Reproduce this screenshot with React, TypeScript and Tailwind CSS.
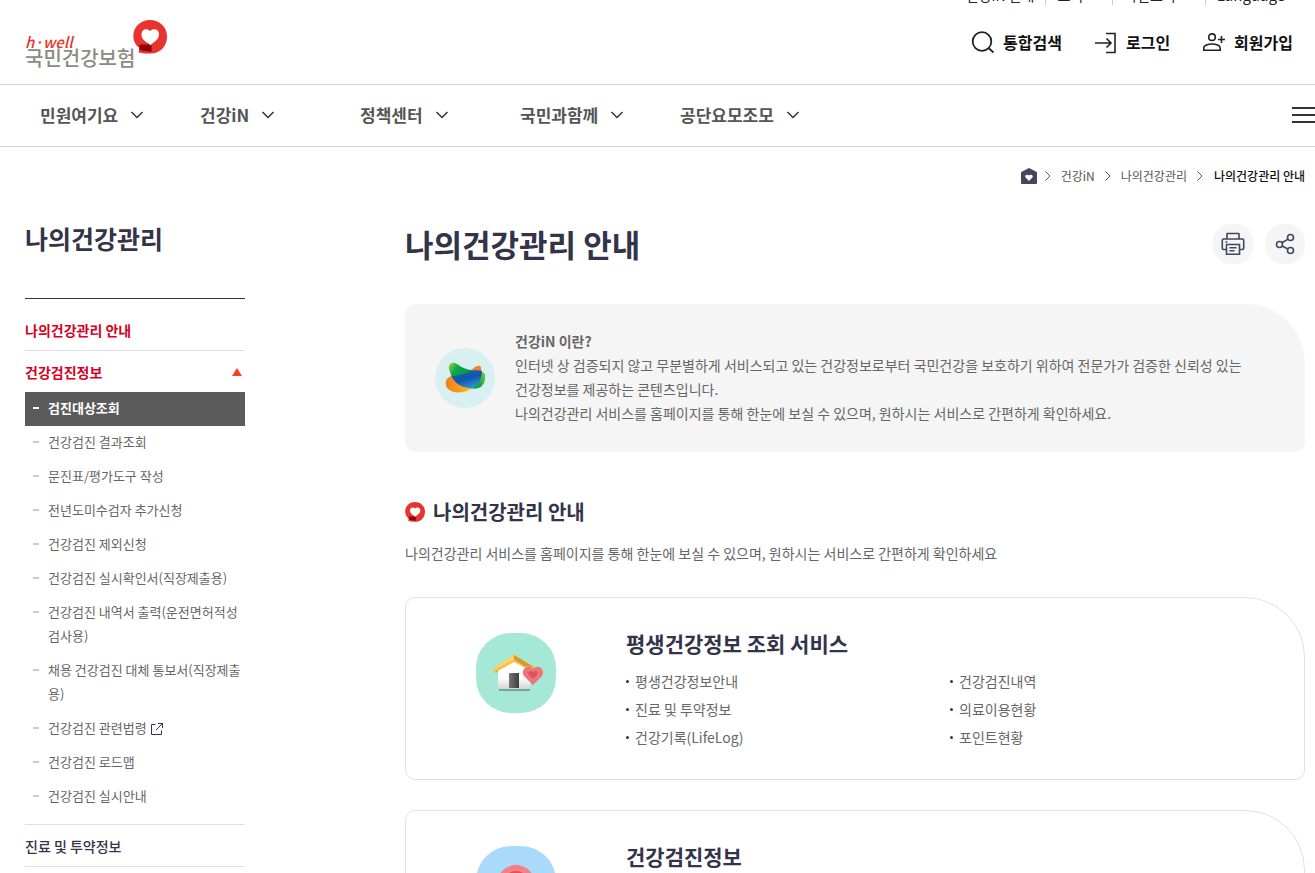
import React from 'react'
import clsx from 'clsx'

const mainMenu = ['민원여기요', '건강iN', '정책센터', '국민과함께', '공단요모조모']

const subMenu = [
  { label: '검진대상조회', active: true },
  { label: '건강검진 결과조회' },
  { label: '문진표/평가도구 작성' },
  { label: '전년도미수검자 추가신청' },
  { label: '건강검진 제외신청' },
  { label: '건강검진 실시확인서(직장제출용)' },
  { label: '건강검진 내역서 출력(운전면허적성검사용)' },
  { label: '채용 건강검진 대체 통보서(직장제출용)' },
  { label: '건강검진 관련법령', external: true },
  { label: '건강검진 로드맵' },
  { label: '건강검진 실시안내' },
]

interface IconProps {
  className?: string
}

function HeartMark({ className }: IconProps) {
  return (
    <svg viewBox="0 0 34 34" className={className} aria-hidden="true">
      <path d="M17 0C26.5 0 34 7 34 16.4 34 26.5 26.5 34 17 33.5 13 33.8 9 33 5.5 32.500L6.500 28C2.500 25 .3 21 .3 16.400.3 7 7.500 0 17 0Z" fill="#e7342f" />
      <path d="M6.800 24.500L18.500 24.500V31.800C14 31.700 9.500 30.800 6.200 29.500Z" fill="#8f0008" />
      <path d="M17 11.200C14.500 8 8.500 8.800 8.500 14.500 8.500 18.500 11.500 21 14 22.500 16 23.700 17 24.500 17.500 25.500 18 24.500 19 23.700 21 22.300 24 20 26 18 26 14.500 26 8.800 20 8 17 11.200Z" fill="#fff" />
    </svg>
  )
}

function ChevronDown() {
  return (
    <svg width="14" height="14" viewBox="0 0 14 14" fill="none" stroke="#333" strokeWidth="1.5" aria-hidden="true">
      <path d="M1.500 4L7 9.500 12.500 4" />
    </svg>
  )
}

function ChevronRight() {
  return (
    <svg width="6" height="10" viewBox="0 0 6 10" fill="none" stroke="#555" aria-hidden="true">
      <path d="M.5.500l4.500 4.500-4.500 4.500" />
    </svg>
  )
}

function SearchIcon() {
  return (
    <svg width="24" height="24" viewBox="0 0 24 24" fill="none" stroke="#222" strokeWidth="1.8" aria-hidden="true">
      <circle cx="11" cy="11.500" r="9.300" />
      <path d="M17.500 18l5 4.500" />
    </svg>
  )
}

function LoginIcon() {
  return (
    <svg width="24" height="24" viewBox="0 0 24 24" fill="none" stroke="#222" strokeWidth="1.600" aria-hidden="true">
      <path d="M12 3.500h9v19h-9M1 13h16M12.500 8.500L17 13l-4.500 4.500" />
    </svg>
  )
}

function JoinIcon() {
  return (
    <svg width="24" height="24" viewBox="0 0 24 24" fill="none" stroke="#222" strokeWidth="1.600" aria-hidden="true">
      <circle cx="10" cy="7.200" r="3.300" />
      <path d="M1.800 20.200v-2.200c0-2.500 4-4 8.200-4s8.200 1.500 8.200 4v2.200ZM19.500 6v7M16 9.500h7" />
    </svg>
  )
}

function HomeIcon() {
  return (
    <svg width="16" height="16" viewBox="0 0 16 16" aria-hidden="true">
      <path d="M8 0l7.300 3.800q.7.400.7 1.200v10q0 1-1 1H1q-1 0-1-1V5q0-.8.7-1.200Z" fill="#45455f" />
      <path d="M8 13L4.800 9.800C3 7.800 6 5.300 8 7.500 10 5.300 13 7.800 11.200 9.800Z" fill="#fff" />
    </svg>
  )
}

function PrintIcon() {
  return (
    <svg width="24" height="24" viewBox="0 0 24 24" fill="none" stroke="#45455f" strokeWidth="1.600" aria-hidden="true">
      <path d="M6 7V2q0-.5.500-.500h11q.5 0 .5.500v5M5.500 17.500H2.500q-1.200 0-1.200-1.200V8.200Q1.300 7 2.500 7h19q1.200 0 1.200 1.200v8.100q0 1.200-1.200 1.200H18.500" />
      <path d="M5.500 12.500h13v9.800h-13ZM8.500 15.700h7M8.500 18.700h5M4.500 10h2" />
    </svg>
  )
}

function ShareIcon() {
  return (
    <svg width="24" height="24" viewBox="0 0 24 24" fill="none" stroke="#45455f" strokeWidth="1.600" aria-hidden="true">
      <circle cx="6.500" cy="12.500" r="3" />
      <circle cx="17.500" cy="5.500" r="3" />
      <circle cx="17.500" cy="18.500" r="3" />
      <path d="M9 10.800l6-3.700M9 14l6 3" />
    </svg>
  )
}

function ExternalIcon() {
  return (
    <svg className="ml-1 inline" width="12" height="12" viewBox="0 0 12 12" fill="none" stroke="#33334a" aria-label="새창">
      <path d="M4.500 1.500h-4v10h10v-4M7 .500h4.500v4.500M11.500.500L5 7" />
    </svg>
  )
}

function WaveLogo() {
  return (
    <svg width="60" height="60" viewBox="0 0 60 60" className="shrink-0" aria-hidden="true">
      <defs>
        <linearGradient id="green" x1="0" x2="1" y2=".4">
          <stop offset="0" stopColor="#b5d334" />
          <stop offset=".4" stopColor="#0ba84a" />
          <stop offset="1" stopColor="#0b9444" />
        </linearGradient>
        <linearGradient id="blue" x1=".2" x2=".7" y1="0" y2="1">
          <stop offset="0" stopColor="#1560b0" />
          <stop offset=".5" stopColor="#1157ad" />
          <stop offset="1" stopColor="#2b9be0" />
        </linearGradient>
        <linearGradient id="orange" x1="0" x2="1">
          <stop offset="0" stopColor="#f47b20" />
          <stop offset="1" stopColor="#ffc20e" />
        </linearGradient>
        <linearGradient id="leaf" x1="1" x2="0" y2="1">
          <stop offset="0" stopColor="#8cc63f" />
          <stop offset=".6" stopColor="#0ba84a" />
        </linearGradient>
      </defs>
      <circle cx="30" cy="30" r="30" fill="#d8f0f2" />
      <path d="M36 22.500C40 18.500 45 16 46 19.500L46.500 24 38 26Z" fill="#f58220" />
      <path d="M17 28C10 29 9 37 13 41 20 47 31 44.500 38 40L28 33Z" fill="url(#orange)" />
      <path d="M46 24C50 24 50.500 27 50 31 49 38 44 41.500 37.500 40.500Z" fill="url(#leaf)" />
      <path d="M14 21C13 15 18 13.500 22 16 27 20 33 22 38 22L34 28 16.500 28.500Z" fill="url(#green)" />
      <path d="M16.500 28C23 28 30 26 35 23.500 38 22 44 22 47 23 47 30 43 37 37 40.500 27 40 19 35 16.500 28Z" fill="url(#blue)" />
    </svg>
  )
}

function HouseArt() {
  return (
    <svg width="80" height="80" viewBox="0 0 80 80" aria-hidden="true">
      <defs>
        <linearGradient id="wall" x2="0" y2="1">
          <stop offset=".6" stopColor="#fff" />
          <stop offset="1" stopColor="#d5d5d5" />
        </linearGradient>
        <linearGradient id="door">
          <stop offset="0" stopColor="#777" />
          <stop offset="1" stopColor="#3c3c3c" />
        </linearGradient>
      </defs>
      <path d="M23 56h31v2H23Z" fill="#6da898" />
      <path d="M18 36l4 4v-3Z" fill="#c98f2a" />
      <path d="M22 38L38 28 54 38v17q0 1-1 1H23q-1 0-1-1Z" fill="url(#wall)" />
      <path d="M38 22L58 34v5L38 29 18 40V35Z" fill="#f7bd45" />
      <path d="M38 22L58 34 48 33 38 26Z" fill="#d89a28" />
      <path d="M38 22L18 35v2L38 27Z" fill="#ffd166" />
      <path d="M33 41q0-1 1-1h9v15H33Z" fill="url(#door)" />
      <path d="M57 52L48.500 43.500C44 38 50 30 57 35.500 64 30 70 38 65.500 43.500Z" fill="#f0747b" />
      <path d="M57 46L52.800 42C51 39 54 36.500 57 39.300 60 36.500 63 39 61.200 42Z" fill="#e2525c" />
    </svg>
  )
}

function CheckupArt() {
  return (
    <svg width="80" height="80" viewBox="0 0 80 80" aria-hidden="true">
      <circle cx="40" cy="38" r="19" fill="#f57f84" />
      <circle cx="40" cy="38" r="13" fill="#d9525c" />
    </svg>
  )
}

interface ServiceCardProps {
  title: string
  tint: string
  art: React.ReactNode
  items: string[]
}

function ServiceCard({ title, tint, art, items }: ServiceCardProps) {
  return (
    <section className="flex gap-[70px] rounded-[10px] rounded-tr-[60px] border border-[#e1e1e1] pt-[33px] pr-[30px] pb-[28px] pl-[70px]">
      <div className={clsx('mt-[2px] h-20 w-20 shrink-0 overflow-hidden rounded-[35px]', tint)}>{art}</div>
      <div className="flex-1">
        <h3 className="text-[21px] leading-6 font-bold text-[#33334a]">{title}</h3>
        <ul className="mt-3 grid grid-cols-2 text-sm leading-7 text-[#666]">
          {items.map((item) => (
            <li key={item} className="flex items-center gap-[6px]">
              <span className="h-[3px] w-[3px] rounded-full bg-[#33334a]" />
              <a href="#">{item}</a>
            </li>
          ))}
        </ul>
      </div>
    </section>
  )
}

function Header() {
  return (
    <header className="overflow-hidden">
      <div className="flex h-[84px] justify-between pr-[22px] pl-[25px]">
        <a href="#" className="flex items-start pt-5" aria-label="국민건강보험">
          <span className="pt-[13px]">
            <span className="block text-[15px] leading-[18px] font-medium text-[#e7342f] italic">h·well</span>
            <span className="block text-[20px] leading-[14px] font-medium text-[#8d8a82]">국민건강보험</span>
          </span>
          <HeartMark className="-ml-[2px] h-[34px] w-[34px]" />
        </a>
        <div className="-mt-[15px] flex flex-col gap-6">
          <ul className="flex h-5 items-center justify-end divide-x divide-[#ccc] text-sm leading-5 text-[#222]">
            <li className="pr-[11px]"><a href="#">건강iN 안내</a></li>
            <li className="pr-[29px] pl-[11px]"><a href="#">보기</a></li>
            <li className="pr-[29px] pl-[11px]"><a href="#">화면크기</a></li>
            <li className="pr-2 pl-[11px] text-[15px]"><a href="#">Language</a></li>
          </ul>
          <div className="flex items-center justify-end gap-8 pt-[1px] text-[16px] leading-6 font-bold text-[#111]">
            <button type="button" className="flex items-center gap-2"><SearchIcon />통합검색</button>
            <a href="#" className="flex items-center gap-2"><LoginIcon />로그인</a>
            <a href="#" className="flex items-center gap-2"><JoinIcon />회원가입</a>
          </div>
        </div>
      </div>
      <nav className="flex h-[63px] items-center justify-between border-y border-[#d5d5d5] pb-[2px] pl-10">
        <ul className="flex">
          {mainMenu.map((menu) => (
            <li key={menu} className="w-40">
              <a href="#" className="flex items-center gap-3 text-[17px] font-bold text-[#555]">
                {menu}
                <ChevronDown />
              </a>
            </li>
          ))}
        </ul>
        <button type="button" aria-label="전체메뉴" className="flex w-[23px] flex-col gap-[5px]">
          <span className="h-[2px] bg-[#333]" />
          <span className="h-[2px] bg-[#333]" />
          <span className="h-[2px] bg-[#333]" />
        </button>
      </nav>
    </header>
  )
}

function Sidebar() {
  return (
    <aside className="w-[220px] shrink-0">
      <h2 className="pt-[27px] pb-[42px] text-[25px] leading-9 font-bold text-[#33334a]">나의건강관리</h2>
      <ul className="border-t border-[#33334a] pt-[11px] text-sm">
        <li className="border-b border-[#dfdfe3]">
          <a href="#" className="flex h-10 items-center font-bold text-[#d7001f]">나의건강관리 안내</a>
        </li>
        <li className="border-b border-[#dfdfe3] pb-[10px]">
          <a href="#" className="flex h-[41px] items-center justify-between pr-[3px] font-bold text-[#d7001f]">
            건강검진정보
            <svg width="10" height="8" viewBox="0 0 10 8" aria-hidden="true">
              <path d="M5 0l5 8H0Z" fill="#ff3d1f" />
            </svg>
          </a>
          <ul className="text-[13px] leading-6">
            {subMenu.map((item) => (
              <li
                key={item.label}
                className={clsx(
                  'flex gap-[9px] pt-1 pb-[6px] pl-2',
                  item.active ? 'bg-[#5b5b5b] font-bold text-white' : 'text-[#666]'
                )}
              >
                <span className={clsx('mt-[11px] h-[2px] w-[6px] shrink-0', item.active ? 'bg-white' : 'bg-[#ccc]')} />
                <a href="#">
                  {item.label}
                  {item.external && <ExternalIcon />}
                </a>
              </li>
            ))}
          </ul>
        </li>
        <li className="border-b border-[#dfdfe3]">
          <a href="#" className="flex h-[41px] items-center font-medium text-[#33334a]">진료 및 투약정보</a>
        </li>
      </ul>
    </aside>
  )
}

export default function App() {
  return (
    <div className="bg-white font-['Noto_Sans_CJK_KR',sans-serif]">
      <Header />
      <div className="pr-[10px] pl-[25px]">
        <nav aria-label="현재 위치" className="flex h-[46px] items-center justify-end gap-2 pt-3 text-xs text-[#555]">
          <a href="#" aria-label="홈"><HomeIcon /></a>
          <ChevronRight />
          <a href="#" className="px-[2px]">건강iN</a>
          <ChevronRight />
          <a href="#" className="px-[2px]">나의건강관리</a>
          <ChevronRight />
          <a href="#" className="pl-[3px] font-medium text-[#111]">나의건강관리 안내</a>
        </nav>
        <div className="flex gap-40">
          <Sidebar />
          <main className="min-w-0 flex-1 pt-[31px]">
            <div className="flex items-center justify-between">
              <h1 className="text-[31px] leading-[38px] font-bold text-[#33334a]">나의건강관리 안내</h1>
              <div className="flex gap-3">
                <button type="button" aria-label="인쇄" className="flex h-10 w-10 items-center justify-center rounded-[18px] bg-[#f5f5f5]">
                  <PrintIcon />
                </button>
                <button type="button" aria-label="공유" className="flex h-10 w-10 items-center justify-center rounded-[18px] bg-[#f5f5f5]">
                  <ShareIcon />
                </button>
              </div>
            </div>
            <div className="mt-10 flex items-center gap-5 rounded-[10px] rounded-tr-[60px] bg-[#f5f5f5] py-[25px] pr-[50px] pl-[30px]">
              <WaveLogo />
              <div className="pb-[2px] text-sm leading-6 text-[#666]">
                <strong>건강iN 이란?</strong>
                <p>
                  인터넷 상 검증되지 않고 무분별하게 서비스되고 있는 건강정보로부터 국민건강을 보호하기 위하여 전문가가 검증한 신뢰성 있는
                  건강정보를 제공하는 콘텐츠입니다.
                </p>
                <p>나의건강관리 서비스를 홈페이지를 통해 한눈에 보실 수 있으며, 원하시는 서비스로 간편하게 확인하세요.</p>
              </div>
            </div>
            <h2 className="mt-[45px] flex items-center gap-2 text-[20px] leading-[30px] font-bold text-[#33334a]">
              <HeartMark className="h-5 w-5" />
              나의건강관리 안내
            </h2>
            <p className="mt-[14px] text-sm leading-6 text-[#666]">
              나의건강관리 서비스를 홈페이지를 통해 한눈에 보실 수 있으며, 원하시는 서비스로 간편하게 확인하세요
            </p>
            <div className="mt-8 flex flex-col gap-[30px]">
              <ServiceCard
                title="평생건강정보 조회 서비스"
                tint="bg-[#a5e8d5]"
                art={<HouseArt />}
                items={['평생건강정보안내', '건강검진내역', '진료 및 투약정보', '의료이용현황', '건강기록(LifeLog)', '포인트현황']}
              />
              <ServiceCard title="건강검진정보" tint="bg-[#a9dafc]" art={<CheckupArt />} items={[]} />
            </div>
          </main>
        </div>
      </div>
    </div>
  )
}
